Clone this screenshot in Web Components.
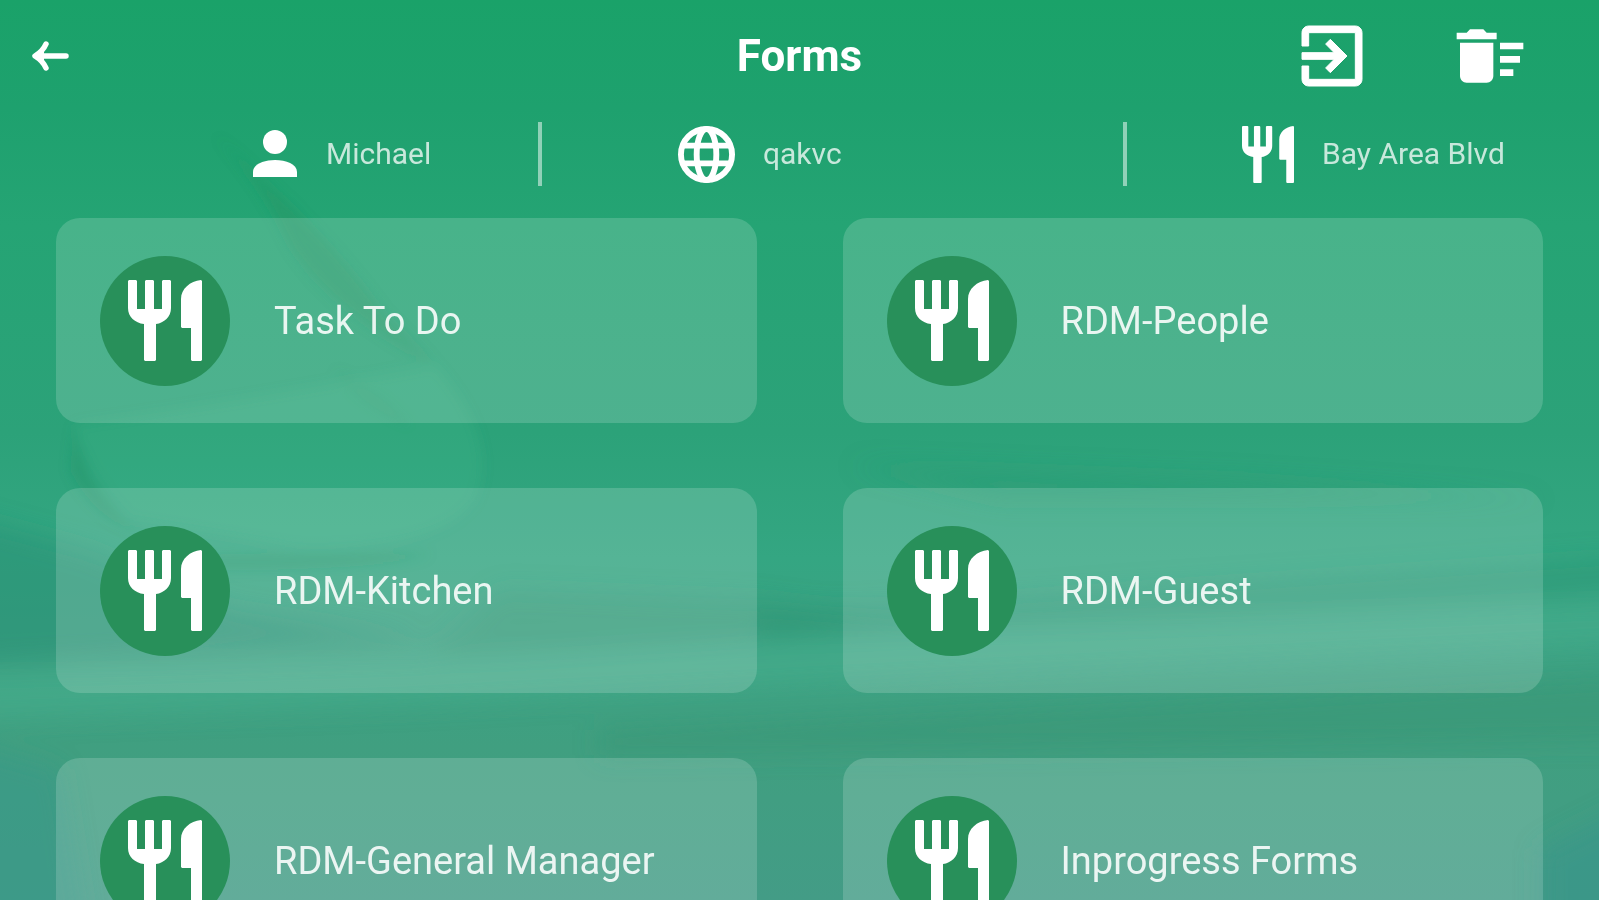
<!DOCTYPE html>
<html lang="en">
<head>
<meta charset="utf-8">
<title>Forms</title>
<style>
  body { margin: 0; background: #2ca377; color: #fff; font-family: Roboto, "Liberation Sans", sans-serif; }
</style>
</head>
<body>
<forms-page>
  <top-bar slot="header">Forms</top-bar>
  <info-bar slot="info">
    <info-item slot="user" icon="person">Michael</info-item>
    <info-item slot="site" icon="globe">qakvc</info-item>
    <info-item slot="store" icon="fork">Bay Area Blvd</info-item>
  </info-bar>
  <form-card>Task To Do</form-card>
  <form-card>RDM-People</form-card>
  <form-card>RDM-Kitchen</form-card>
  <form-card>RDM-Guest</form-card>
  <form-card>RDM-General Manager</form-card>
  <form-card>Inprogress Forms</form-card>
</forms-page>

<script>
// [viewBox, markup] for each icon
const ICONS = {
  back: ['0 0 38 30', '<path d="M14 3Q11 10 3 15Q11 20 14 27M5 15H34" fill="none" stroke="currentColor" stroke-width="5.5" stroke-linecap="round" stroke-linejoin="round"/><path d="M3 15L12 9V21Z"/>'],
  exit: ['0 0 24 24', '<path d="M10.09 15.59L11.5 17l5-5-5-5-1.41 1.41L12.67 11H3v2h9.67l-2.58 2.59zM19 3H5c-1.11 0-2 .9-2 2v4h2V5h14v14H5v-4H3v4c0 1.1.89 2 2 2h14c1.1 0 2-.9 2-2V5c0-1.1-.9-2-2-2z" stroke="currentColor" stroke-width=".3" stroke-linejoin="round"/>'],
  sweep: ['0 0 24 24', '<path d="M15 16h4v2h-4zm0-8h7v2h-7zm0 4h6v2h-6zM3 18c0 1.1.9 2 2 2h6c1.1 0 2-.9 2-2V8H3v10zM14 5h-3l-1-1H6L5 5H2v2h12z"/>'],
  person: ['0 0 46 48', '<circle cx="23" cy="12" r="12"/><path d="M1 47V42C1 34 12 30 23 30S45 34 45 42V47Z"/>'],
  globe: ['0 0 58 58', '<g fill="none" stroke="currentColor" stroke-width="6"><circle cx="29" cy="29" r="26"/><ellipse cx="29" cy="29" rx="10" ry="26"/><path d="M5 20H53M5 38H53"/></g>'],
  fork: ['0 0 74 81', '<path d="M1 0H8L9 1V29H17V1L18 0H25L26 1V29H34V1L35 0H42L43 1V28C43 37 36 43 28 44V80L27 81H17L16 80V44C7 43 0 37 0 28V1ZM73 0L74 1V80L73 81H64L63 80V48H54L53 47V19C53 9 62 1 73 0Z"/>']
};

class AppIcon extends HTMLElement {
  constructor() {
    super();
    this.attachShadow({ mode: 'open' });
  }
  connectedCallback() {
    const [box, shape] = ICONS[this.getAttribute('name')];
    this.shadowRoot.innerHTML = `
      <style>
        :host { display: block; flex: none; }
        svg { display: block; width: 100%; height: 100%; fill: currentColor; }
      </style>
      <svg viewBox="${box}" aria-hidden="true">${shape}</svg>
    `;
  }
}
customElements.define('app-icon', AppIcon);

class TopBar extends HTMLElement {
  constructor() {
    super();
    this.attachShadow({ mode: 'open' });
    this.shadowRoot.innerHTML = `
      <style>
        :host { display: grid; grid-template-columns: 1fr auto 1fr; align-items: center; height: 112px; padding: 0 32px; box-sizing: border-box; }
        button { padding: 0; border: 0; background: none; color: inherit; cursor: pointer; }
        .back { justify-self: start; }
        .back app-icon { width: 38px; height: 30px; }
        h1 { margin: 0; font-size: 44px; line-height: 52px; font-weight: 700; }
        .actions { display: flex; gap: 78px; justify-self: end; padding-right: 37px; }
        .actions app-icon { width: 80px; height: 80px; }
      </style>
      <button class="back" aria-label="Back"><app-icon name="back"></app-icon></button>
      <h1><slot></slot></h1>
      <div class="actions">
        <button aria-label="Exit"><app-icon name="exit"></app-icon></button>
        <button aria-label="Clear"><app-icon name="sweep"></app-icon></button>
      </div>
    `;
  }
}
customElements.define('top-bar', TopBar);

class InfoItem extends HTMLElement {
  constructor() {
    super();
    this.attachShadow({ mode: 'open' });
  }
  connectedCallback() {
    const icon = this.getAttribute('icon');
    this.shadowRoot.innerHTML = `
      <style>
        :host { display: flex; align-items: center; gap: 28px; font-size: 30px; line-height: 36px; white-space: nowrap; }
        app-icon { height: 57px; }
        .person { width: 46px; height: 48px; }
        .globe { width: 57px; }
        .fork { width: 52px; }
        span { opacity: .75; }
      </style>
      <app-icon class="${icon}" name="${icon}"></app-icon>
      <span><slot></slot></span>
    `;
  }
}
customElements.define('info-item', InfoItem);

class InfoBar extends HTMLElement {
  constructor() {
    super();
    this.attachShadow({ mode: 'open' });
    this.shadowRoot.innerHTML = `
      <style>
        :host { display: grid; grid-template-columns: 542fr 585fr 472fr; height: 84px; align-items: center; }
        div { display: flex; align-items: center; height: 64px; box-sizing: border-box; border-right: 4px solid rgba(255, 255, 255, .5); }
        .user { padding-left: 252px; }
        .site { padding-left: 136px; }
        .store { padding-left: 115px; border: 0; }
      </style>
      <div class="user"><slot name="user"></slot></div>
      <div class="site"><slot name="site"></slot></div>
      <div class="store"><slot name="store"></slot></div>
    `;
  }
}
customElements.define('info-bar', InfoBar);

class FormCard extends HTMLElement {
  constructor() {
    super();
    this.attachShadow({ mode: 'open' });
    this.shadowRoot.innerHTML = `
      <style>
        :host { display: block; }
        button {
          display: flex; align-items: center; gap: 44px; width: 100%; height: 205px; padding: 0 44px;
          border: 0; border-radius: 24px; background: rgba(255, 255, 255, .165); color: inherit;
          font: inherit; font-size: 38px; line-height: 44px; text-align: left; cursor: pointer;
        }
        .badge { display: grid; place-items: center; flex: none; width: 130px; height: 130px; border-radius: 50%; background: #28905a; }
        app-icon { width: 74px; height: 81px; }
        .label { opacity: .88; }
      </style>
      <button>
        <span class="badge"><app-icon name="fork"></app-icon></span>
        <span class="label"><slot></slot></span>
      </button>
    `;
  }
}
customElements.define('form-card', FormCard);

// Tinted photo behind everything, drawn as soft shapes
class PageBackdrop extends HTMLElement {
  constructor() {
    super();
    this.attachShadow({ mode: 'open' });
    this.shadowRoot.innerHTML = `
      <style>
        :host { display: block; overflow: hidden; }
        svg { display: block; width: 100%; height: 100%; }
      </style>
      <svg viewBox="0 0 1599 900" preserveAspectRatio="none" aria-hidden="true">
        <defs>
          <linearGradient id="base" x1="0" y1="0" x2="0" y2="1">
            <stop offset="0" stop-color="#1aa269"/>
            <stop offset=".12" stop-color="#1ea16e"/>
            <stop offset=".25" stop-color="#25a474"/>
            <stop offset=".48" stop-color="#2ca279"/>
            <stop offset=".62" stop-color="#34a682"/>
            <stop offset=".7" stop-color="#3ba283"/>
            <stop offset=".83" stop-color="#409f80"/>
            <stop offset="1" stop-color="#439c86"/>
          </linearGradient>
          <filter id="soft" x="-20%" y="-50%" width="140%" height="200%"><feGaussianBlur stdDeviation="12"/></filter>
          <filter id="edge" x="-20%" y="-20%" width="140%" height="140%"><feGaussianBlur stdDeviation="6"/></filter>
        </defs>
        <rect width="1599" height="900" fill="url(#base)"/>
        <g filter="url(#soft)">
          <path d="M-40 515L90 550L230 610L420 640L-40 665Z" fill="#2c8f74" opacity=".55"/>
          <path d="M500 590L760 600L900 620L760 640L430 655Z" fill="#2c9474" opacity=".4"/>
          <path d="M-40 672L500 655L1000 628L1640 600V645L900 680L400 705L-40 720Z" fill="#46b18f" opacity=".5"/>
          <path d="M760 615L1640 555V590L760 640Z" fill="#2b9474" opacity=".4"/>
          <path d="M600 730L1640 675V740L600 755Z" fill="#3a9474" opacity=".5"/>
          <path d="M-40 740L60 770L90 960H-40Z" fill="#379889" opacity=".5"/>
          <path d="M1640 800L1540 850V940H1640Z" fill="#36958a" opacity=".6"/>
          <path d="M850 465L1250 480L1550 500L1000 500Z" fill="#289671" opacity=".35"/>
        </g>
        <g filter="url(#edge)">
          <path d="M215 135L258 175Q330 240 385 315L435 365Q330 310 290 245Q260 180 215 135Z" fill="#259060" opacity=".4"/>
          <path d="M335 370Q390 400 412 428Q360 405 335 370Z" fill="#259060" opacity=".25"/>
          <path d="M75 425Q85 500 145 535Q95 520 70 470Z" fill="#259060" opacity=".3"/>
          <path d="M435 365Q500 440 475 500Q440 550 300 548L130 520Q90 480 75 425Q250 400 435 365Z" fill="#48bd90" opacity=".2"/>
          <path d="M200 555Q330 552 430 553Q400 570 210 570Z" fill="#259060" opacity=".3"/>
        </g>
      </svg>
    `;
  }
}
customElements.define('page-backdrop', PageBackdrop);

class FormsPage extends HTMLElement {
  constructor() {
    super();
    this.attachShadow({ mode: 'open' });
    this.shadowRoot.innerHTML = `
      <style>
        :host { display: grid; grid-template: 100vh / 100%; overflow: hidden; }
        page-backdrop, .content { grid-area: 1 / 1; min-height: 0; }
        .content { display: flex; flex-direction: column; z-index: 1; }
        main {
          flex: 1; min-height: 0; overflow-y: auto; scrollbar-width: none;
          display: grid; grid-template-columns: 1fr 1fr; grid-auto-rows: max-content; gap: 65px 86px; padding: 22px 56px;
        }
      </style>
      <page-backdrop></page-backdrop>
      <div class="content">
        <slot name="header"></slot>
        <slot name="info"></slot>
        <main><slot></slot></main>
      </div>
    `;
  }
}
customElements.define('forms-page', FormsPage);
</script>
</body>
</html>
